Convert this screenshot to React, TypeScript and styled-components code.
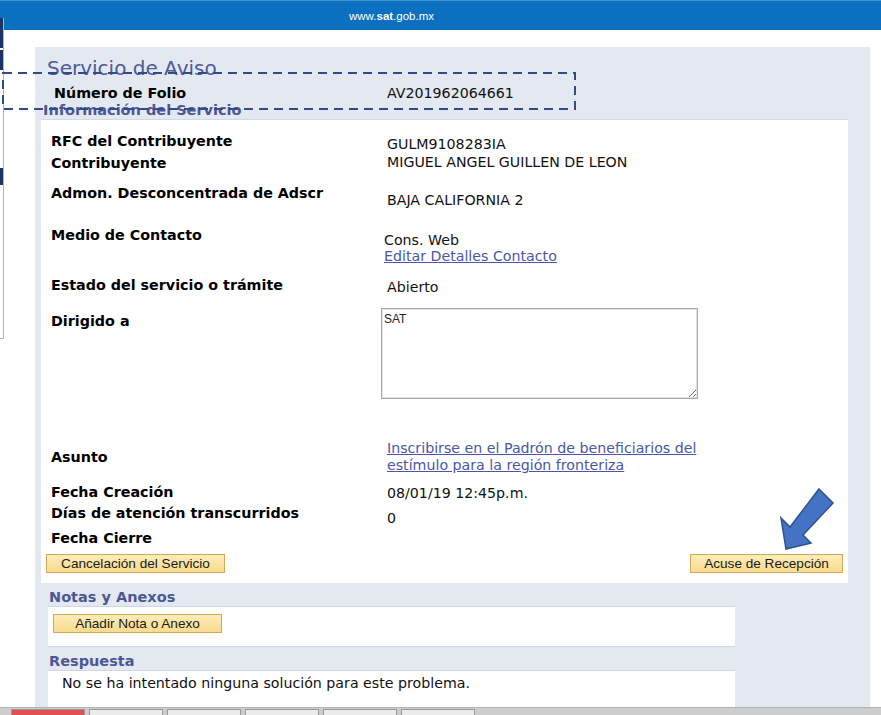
import styled, { createGlobalStyle } from "styled-components";

const GlobalStyle = createGlobalStyle`
  html, body {
    margin: 0;
    padding: 0;
    background: #fff;
  }
  body {
    font-family: "DejaVu Sans", Verdana, sans-serif;
  }
`;

const Page = styled.div`
  position: relative;
  width: 881px;
  height: 715px;
  overflow: hidden;
  display: flex;
  flex-direction: column;
`;

const TopBar = styled.header`
  flex: none;
  height: 30px;
  box-sizing: border-box;
  background: #0a70bf;
  border-top: 1px solid #3f92d3;
  display: flex;
  align-items: center;
  padding-left: 349px;
  color: #fff;
  font: 11.5px "Liberation Sans", Arial, sans-serif;

  b {
    font-weight: 700;
  }
`;

// borde de la ventana que asoma por la izquierda
const SideWindow = styled.div`
  position: absolute;
  left: 0;
  top: 18px;
  width: 3px;
  height: 320px;
  background: #fff;
  border-right: 1px solid #aab5d3;
  border-bottom: 1px solid #aab5d3;
`;

const SideMark = styled.span<{ $top: number; $h: number }>`
  position: absolute;
  left: 0;
  top: ${(p) => p.$top}px;
  width: 3px;
  height: ${(p) => p.$h}px;
  background: #1c3466;
`;

const Main = styled.main`
  flex: 1;
  min-height: 0;
  display: flex;
  padding: 17px 11px 0 35px;
`;

const Panel = styled.section`
  flex: 1;
  min-height: 0;
  overflow: hidden;
  background: #e3e8f1;
  display: flex;
  flex-direction: column;
  padding: 9px 22px 0 6px;
`;

const Title = styled.h1`
  margin: 0 0 0 6px;
  font-size: 20px;
  line-height: 24px;
  font-weight: 400;
  color: #4e5b98;
`;

const FolioRow = styled.div`
  display: grid;
  grid-template-columns: 333px 1fr;
  margin: 5px 0 0 13px;
  font-size: 14.3px;
  line-height: 16px;
`;

const SectionTitle = styled.h2<{ $left: number }>`
  margin: 1px 0 1px ${(p) => p.$left}px;
  font-size: 14.5px;
  line-height: 16px;
  font-weight: 700;
  color: #4c5893;
`;

const InfoBox = styled.div`
  background: #fff;
  border-top: 1px solid #d2d9e6;
  padding: 13px 5px 10px 10px;
  display: flex;
  flex-direction: column;
`;

const Row = styled.div<{ $h: number }>`
  display: grid;
  grid-template-columns: 336px 1fr;
  align-items: start;
  height: ${(p) => p.$h}px;
`;

const Label = styled.div`
  font-size: 14.3px;
  line-height: 16px;
  font-weight: 700;
  color: #000;
  white-space: nowrap;
`;

const Value = styled.div<{ $dy?: number; $dx?: number }>`
  margin-top: ${(p) => p.$dy ?? 0}px;
  margin-left: ${(p) => p.$dx ?? 0}px;
  font-size: 14.2px;
  line-height: 16px;
  color: #111;
  white-space: nowrap;
`;

const Link = styled.a`
  display: block;
  color: #4a57a6;
  text-decoration: underline;
  line-height: 17px;
  cursor: pointer;
`;

const Notes = styled.textarea`
  display: block;
  box-sizing: border-box;
  width: 317px;
  height: 91px;
  margin: 0;
  padding: 3px 2px;
  border: 1px solid #a9a9a9;
  box-shadow: inset 0 0 0 1px #e4e4e4;
  font: 12px "Liberation Sans", Arial, sans-serif;
  color: #222;
  resize: both;
`;

const ButtonRow = styled.div`
  display: flex;
  justify-content: space-between;
  margin: 0 0 0 -5px;
`;

const GoldButton = styled.button<{ $w: number }>`
  width: ${(p) => p.$w}px;
  height: 19px;
  padding: 0;
  border: 1px solid #d0aa58;
  background: linear-gradient(#fdedb8, #f8db8e);
  font: 13.6px "Liberation Sans", Arial, sans-serif;
  line-height: 17px;
  color: #1a1a1a;
  cursor: pointer;
`;

const SubBox = styled.div<{ $h: number }>`
  box-sizing: border-box;
  width: 687px;
  height: ${(p) => p.$h}px;
  margin-left: 7px;
  flex: none;
  background: #fff;
  border-top: 1px solid #cfd6e4;
  border-bottom: 1px solid #cfd6e4;
  padding: 6px 5px;
`;

const Answer = styled.p`
  margin: -2px 0 0 9px;
  font-size: 14.2px;
  line-height: 16px;
  color: #111;
`;

const Spacer = styled.div<{ $h: number }>`
  height: ${(p) => p.$h}px;
  flex: none;
`;

const TabStrip = styled.footer`
  flex: none;
  height: 8px;
  box-sizing: border-box;
  background: #cdcdcd;
  border-top: 1px solid #b3b3b3;
  display: flex;
  align-items: flex-end;
  gap: 4px;
  padding-left: 11px;
`;

const Tab = styled.span<{ $active?: boolean }>`
  width: 74px;
  height: 6px;
  box-sizing: border-box;
  border: 1px solid #999;
  border-bottom: 0;
  background: ${(p) => (p.$active ? "#e0514e" : "#ececec")};
`;

const Overlay = styled.svg`
  position: absolute;
  pointer-events: none;
  overflow: visible;
`;

export default function App() {
	return (
		<>
			<GlobalStyle />
			<Page>
				<TopBar>
					<span>
						www.<b>sat</b>.gob.mx
					</span>
				</TopBar>
				<Main>
					<Panel>
						<Title>Servicio de Aviso</Title>
						<FolioRow>
							<Label>Número de Folio</Label>
							<Value>AV201962064661</Value>
						</FolioRow>
						<SectionTitle $left={2}>Información del Servicio</SectionTitle>
						<InfoBox>
							<Row $h={22}>
								<Label>RFC del Contribuyente</Label>
								<Value $dy={3}>GULM9108283IA</Value>
							</Row>
							<Row $h={30}>
								<Label>Contribuyente</Label>
								<Value $dy={-1}>MIGUEL ANGEL GUILLEN DE LEON</Value>
							</Row>
							<Row $h={42}>
								<Label>Admon. Desconcentrada de Adscr</Label>
								<Value $dy={7}>BAJA CALIFORNIA 2</Value>
							</Row>
							<Row $h={50}>
								<Label>Medio de Contacto</Label>
								<Value $dy={5} $dx={-3}>
									Cons. Web
									<Link>Editar Detalles Contacto</Link>
								</Value>
							</Row>
							<Row $h={36}>
								<Label>Estado del servicio o trámite</Label>
								<Value $dy={2}>Abierto</Value>
							</Row>
							<Row $h={136}>
								<Label>Dirigido a</Label>
								<Value $dy={-5} $dx={-6}>
									<Notes readOnly defaultValue="SAT" />
								</Value>
							</Row>
							<Row $h={35}>
								<Label>Asunto</Label>
								<Value $dy={-9}>
									<Link>Inscribirse en el Padrón de beneficiarios del</Link>
									<Link>estímulo para la región fronteriza</Link>
								</Value>
							</Row>
							<Row $h={21}>
								<Label>Fecha Creación</Label>
								<Value $dy={1}>08/01/19 12:45p.m.</Value>
							</Row>
							<Row $h={25}>
								<Label>Días de atención transcurridos</Label>
								<Value $dy={5}>0</Value>
							</Row>
							<Row $h={24}>
								<Label>Fecha Cierre</Label>
							</Row>
							<ButtonRow>
								<GoldButton $w={179}>Cancelación del Servicio</GoldButton>
								<GoldButton $w={153}>Acuse de Recepción</GoldButton>
							</ButtonRow>
						</InfoBox>
						<Spacer $h={5} />
						<SectionTitle $left={8}>Notas y Anexos</SectionTitle>
						<SubBox $h={41}>
							<GoldButton $w={169}>Añadir Nota o Anexo</GoldButton>
						</SubBox>
						<Spacer $h={5} />
						<SectionTitle $left={8}>Respuesta</SectionTitle>
						<SubBox $h={60}>
							<Answer>No se ha intentado ninguna solución para este problema.</Answer>
						</SubBox>
					</Panel>
				</Main>
				<TabStrip>
					<Tab $active />
					<Tab />
					<Tab />
					<Tab />
					<Tab />
					<Tab />
				</TabStrip>

				<SideWindow>
					<SideMark $top={0} $h={30} />
					<SideMark $top={32} $h={20} />
					<SideMark $top={150} $h={17} />
				</SideWindow>

				{/* recuadro punteado sobre el folio */}
				<Overlay width="574" height="38" style={{ left: 2, top: 72 }}>
					<rect
						x="1"
						y="1"
						width="572"
						height="36"
						fill="none"
						stroke="#2f4b8c"
						strokeWidth="2"
						strokeDasharray="9 6"
					/>
				</Overlay>

				{/* flecha hacia Acuse de Recepción */}
				<Overlay width="65" height="70" style={{ left: 775, top: 485 }}>
					<polygon
						points="44,4 58,18 28,50 36,58 11,64 6,33 15,42"
						fill="#4472c4"
						stroke="#2f528f"
						strokeWidth="1.5"
						strokeLinejoin="miter"
					/>
				</Overlay>
			</Page>
		</>
	);
}
